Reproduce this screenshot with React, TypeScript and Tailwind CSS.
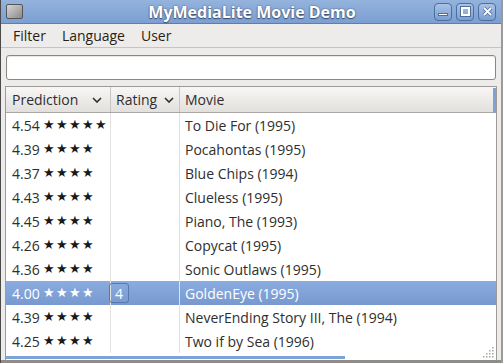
import React from "react";

const rows = [
  { p: "4.54", s: "★★★★★", r: "", m: "To Die For (1995)" },
  { p: "4.39", s: "★★★★", r: "", m: "Pocahontas (1995)" },
  { p: "4.37", s: "★★★★", r: "", m: "Blue Chips (1994)" },
  { p: "4.43", s: "★★★★", r: "", m: "Clueless (1995)" },
  { p: "4.45", s: "★★★★", r: "", m: "Piano, The (1993)" },
  { p: "4.26", s: "★★★★", r: "", m: "Copycat (1995)" },
  { p: "4.36", s: "★★★★", r: "", m: "Sonic Outlaws (1995)" },
  { p: "4.00", s: "★★★★", r: "4", m: "GoldenEye (1995)", sel: true },
  { p: "4.39", s: "★★★★", r: "", m: "NeverEnding Story III, The (1994)" },
  { p: "4.25", s: "★★★★", r: "", m: "Two if by Sea (1996)" },
];

const Chevron = () => (
  <svg width="10" height="6" viewBox="0 0 10 6" className="ml-auto shrink-0">
    <path d="M1 1 L5 5 L9 1" stroke="#2e2e2e" strokeWidth="1.6" fill="none" />
  </svg>
);

const WinButton = ({ children }: { children: React.ReactNode }) => (
  <div className="w-[18px] h-[18px] rounded-[4px] border border-[#4d6f9e] bg-gradient-to-b from-[#a9c3e6] to-[#7c9ed0] flex items-center justify-center">
    {children}
  </div>
);

export default function App() {
  return (
    <div
      className="w-[503px] h-[363px] bg-[#edeceb] border-l border-r-2 border-l-[#4a4a4a] border-r-[#9a9a9a] flex flex-col overflow-hidden text-[#2e2e2e]"
      style={{ fontFamily: '"Open Sans", "Noto Sans", sans-serif' }}
    >
      {/* title bar */}
      <div className="h-[24px] shrink-0 bg-gradient-to-b from-[#94b3dd] to-[#7c9fd2] border-b border-[#5b7fb3] flex items-center px-[5px] relative">
        <div className="w-[17px] h-[15px] rounded-[2px] border border-[#555] bg-gradient-to-br from-[#d8d8d8] to-[#8a8a8a]" />
        <div
          className="absolute left-0 right-0 text-center text-white font-bold text-[16px] leading-none pointer-events-none pl-[2px]"
          style={{ textShadow: "0 0 2px #3a4f70, 0 1px 1px #3a4f70" }}
        >
          MyMediaLite Movie Demo
        </div>
        <div className="ml-auto flex gap-[4px]">
          <WinButton>
            <div className="w-[10px] h-[3px] bg-white border border-[#4d6f9e] mt-[6px]" />
          </WinButton>
          <WinButton>
            <div className="w-[9px] h-[9px] border-2 border-white outline outline-1 outline-[#4d6f9e]" />
          </WinButton>
          <WinButton>
            <svg width="11" height="11" viewBox="0 0 11 11">
              <path d="M2 2 L9 9 M9 2 L2 9" stroke="#4d6f9e" strokeWidth="3.4" />
              <path d="M2 2 L9 9 M9 2 L2 9" stroke="white" strokeWidth="1.8" />
            </svg>
          </WinButton>
        </div>
      </div>

      {/* menu bar */}
      <div className="h-[24px] shrink-0 flex items-center gap-[16px] px-[12px] text-[14px] text-[#2a1e12] border-b border-[#c8c5c1]">
        <span>Filter</span>
        <span>Language</span>
        <span>User</span>
      </div>

      {/* search */}
      <div className="px-[5px] pt-[7px] pb-[6px]">
        <div className="h-[25px] rounded-[3px] border border-[#8a8784] bg-white shadow-[inset_0_1px_1px_rgba(0,0,0,0.1)]" />
      </div>

      {/* table */}
      <div className="mx-[4px] flex-1 border border-[#9d9a97] border-b-0 bg-white flex flex-col relative text-[14px]">
        <div className="h-[26px] shrink-0 flex bg-gradient-to-b from-[#f8f7f6] to-[#e2e0dd] border-b border-[#a9a6a3]">
          <div className="w-[105px] flex items-center pl-[6px] pr-[8px] border-r border-[#c9c6c2]">
            Prediction
            <Chevron />
          </div>
          <div className="w-[69px] flex items-center pl-[5px] pr-[5px] border-r border-[#c9c6c2]">
            Rating
            <Chevron />
          </div>
          <div className="flex-1 flex items-center pl-[5px]">Movie</div>
        </div>
        <div className="absolute right-0 top-[1px] h-[25px] w-[3px] bg-[#7fa2d6]" />
        <div className="flex-1 flex flex-col">
          {rows.map((r, i) => (
            <div
              key={i}
              className={`h-[24px] shrink-0 flex items-center ${
                r.sel ? "bg-gradient-to-b from-[#8bace0] to-[#7899cf] text-white" : ""
              }`}
            >
              <div className="w-[105px] h-full flex items-center pl-[6px] border-r border-[#e4e2df] whitespace-nowrap">
                {r.p}
                <span className={`ml-[3px] text-[13px] tracking-[1px] ${r.sel ? "text-white" : "text-[#1a1a1a]"}`}>
                  {r.s}
                </span>
              </div>
              <div className="w-[69px] h-full flex items-center border-r border-[#e4e2df]">
                {r.r && (
                  <div className="ml-[-2px] w-[20px] h-[20px] rounded-[3px] border border-[#5577aa] flex items-center justify-center">
                    {r.r}
                  </div>
                )}
              </div>
              <div className="flex-1 h-full flex items-center pl-[5px] whitespace-nowrap">{r.m}</div>
            </div>
          ))}
        </div>
        <div className="absolute left-0 bottom-[1px] w-[339px] h-[3px] bg-[#7fa2d6]" />
        <svg width="12" height="12" viewBox="0 0 12 12" className="absolute right-[1px] bottom-[2px]">
          {[
            [10, 2], [10, 5], [7, 5], [10, 8], [7, 8], [4, 8], [10, 11], [7, 11], [4, 11], [1, 11],
          ].map(([x, y], k) => (
            <rect key={k} x={x - 1} y={y - 1} width="1.5" height="1.5" fill="#a8a6a3" />
          ))}
        </svg>
      </div>
      <div className="h-[3px] shrink-0 bg-[#8f8d8a]" />
    </div>
  );
}
